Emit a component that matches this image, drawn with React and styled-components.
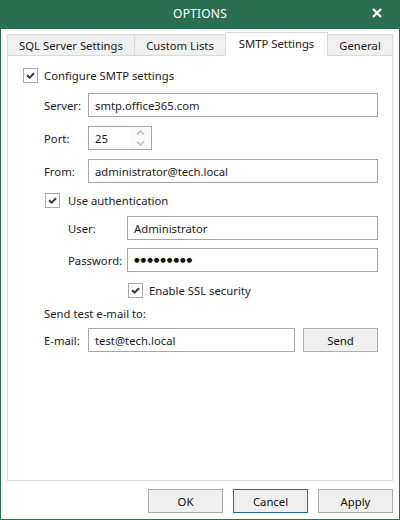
import React from "react";
import styled, { createGlobalStyle } from "styled-components";

const GREEN = "#2b6e51";
const FONT = `"Noto Sans", "Liberation Sans", sans-serif`;

const GlobalStyle = createGlobalStyle`
  html, body {
    margin: 0;
    padding: 0;
    background: #fff;
  }
  body {
    font-family: ${FONT};
    font-size: 11.3px;
    color: #1b1b1b;
  }
  * {
    box-sizing: border-box;
  }
`;

function Check() {
	return (
		<svg width="9" height="7" viewBox="0 0 9 7">
			<path d="M1 3.2 L3.6 5.6 L8 1.2" fill="none" stroke="#3a3a3a" strokeWidth="2" />
		</svg>
	);
}

function CheckItem({ indent, top, gap = 6, children }) {
	return (
		<CheckRow indent={indent} top={top}>
			<CheckBox>
				<Check />
			</CheckBox>
			<CheckText gap={gap}>{children}</CheckText>
		</CheckRow>
	);
}

export default function App() {
	return (
		<>
			<GlobalStyle />
			<Window>
				<TitleBar>
					<span />
					<Title>OPTIONS</Title>
					<Close>
						<svg width="10" height="10" viewBox="0 0 10 10">
							<path d="M1 1 L9 9 M9 1 L1 9" stroke="#fff" strokeWidth="2.2" />
						</svg>
					</Close>
				</TitleBar>

				<Body>
					<TabStrip>
						<Tab width={128} first>
							SQL Server Settings
						</Tab>
						<Tab width={92}>Custom Lists</Tab>
						<Tab width={103} active>
							SMTP Settings
						</Tab>
						<Tab width={66}>General</Tab>
					</TabStrip>

					<Panel>
						<CheckItem indent={0} top={0}>
							Configure SMTP settings
						</CheckItem>

						<FieldRow indent={21} top={10}>
							<Label width={44}>Server:</Label>
							<Field>smtp.office365.com</Field>
						</FieldRow>
						<FieldRow indent={21} top={9}>
							<Label width={44}>Port:</Label>
							<Field width={64}>
								<FieldText>25</FieldText>
								<Spinner>
									<svg width="9" height="5" viewBox="0 0 9 5">
										<path d="M1 4.5 L4.5 1 L8 4.5" fill="none" stroke="#b5b5b5" strokeWidth="1.3" />
									</svg>
									<svg width="9" height="5" viewBox="0 0 9 5">
										<path d="M1 0.5 L4.5 4 L8 0.5" fill="none" stroke="#b5b5b5" strokeWidth="1.3" />
									</svg>
								</Spinner>
							</Field>
						</FieldRow>
						<FieldRow indent={21} top={9}>
							<Label width={44}>From:</Label>
							<Field>administrator@tech.local</Field>
						</FieldRow>

						<CheckItem indent={22} top={10} gap={8}>
							Use authentication
						</CheckItem>
						<FieldRow indent={45} top={8}>
							<Label width={59}>User:</Label>
							<Field>Administrator</Field>
						</FieldRow>
						<FieldRow indent={45} top={8}>
							<Label width={59}>Password:</Label>
							<Field>
								<Dots>●●●●●●●●●</Dots>
							</Field>
						</FieldRow>
						<CheckItem indent={105} top={11}>
							Enable SSL security
						</CheckItem>

						<TextRow indent={21} top={8}>
							Send test e-mail to:
						</TextRow>
						<FieldRow indent={21} top={7}>
							<Label width={44}>E-mail:</Label>
							<Field width={207}>test@tech.local</Field>
							<Button gap={8}>Send</Button>
						</FieldRow>
					</Panel>

					<Footer>
						<Button>OK</Button>
						<Button primary>Cancel</Button>
						<Button>Apply</Button>
					</Footer>
				</Body>
			</Window>
		</>
	);
}

const Window = styled.div`
	width: 400px;
	height: 520px;
	display: flex;
	flex-direction: column;
	border: 1px solid ${GREEN};
	border-top: none;
	background: #fff;
`;

const TitleBar = styled.div`
	height: 29px;
	flex: none;
	display: grid;
	grid-template-columns: 1fr auto 1fr;
	align-items: center;
	background: ${GREEN};
	color: #fff;
	margin: 0 -1px;
	padding: 0 1px;
`;

const Title = styled.div`
	font-size: 12px;
	letter-spacing: 0.2px;
	line-height: 1;
	padding-bottom: 1px;
`;

const Close = styled.div`
	justify-self: end;
	margin-right: 17px;
	display: flex;
	margin-top: -3px;
`;

const Body = styled.div`
	flex: 1;
	display: flex;
	flex-direction: column;
	padding: 3px 6px 0;
`;

const TabStrip = styled.div`
	height: 23px;
	flex: none;
	display: flex;
	align-items: flex-end;
`;

const Tab = styled.div`
	width: ${(p) => p.width}px;
	height: ${(p) => (p.active ? 24 : 21)}px;
	margin-bottom: ${(p) => (p.active ? -1 : 0)}px;
	margin-left: ${(p) => (p.first ? 0 : -1)}px;
	position: relative;
	z-index: ${(p) => (p.active ? 1 : 0)};
	display: flex;
	align-items: center;
	justify-content: center;
	padding-bottom: ${(p) => (p.active ? 2 : 0)}px;
	border: 1px solid #d9d9d9;
	border-bottom: none;
	background: ${(p) => (p.active ? "#fff" : "#f0f0f0")};
	white-space: nowrap;
`;

const Panel = styled.div`
	flex: 1;
	display: flex;
	flex-direction: column;
	padding: 12px 14px 0 15px;
	border: 1px solid #d9d9d9;
	background: #fff;
`;

const CheckRow = styled.div`
	height: 15px;
	display: flex;
	align-items: center;
	margin-top: ${(p) => p.top}px;
	padding-left: ${(p) => p.indent}px;
`;

const CheckBox = styled.div`
	width: 15px;
	height: 15px;
	flex: none;
	display: flex;
	align-items: center;
	justify-content: center;
	border: 1px solid #ababab;
	background: #fff;
`;

const CheckText = styled.span`
	margin-left: ${(p) => p.gap}px;
	white-space: nowrap;
`;

const TextRow = styled.div`
	height: 15px;
	display: flex;
	align-items: center;
	margin-top: ${(p) => p.top}px;
	padding-left: ${(p) => p.indent}px;
`;

const FieldRow = styled.div`
	height: 24px;
	display: flex;
	align-items: center;
	margin-top: ${(p) => p.top}px;
	padding-left: ${(p) => p.indent}px;
`;

const Label = styled.span`
	width: ${(p) => p.width}px;
	flex: none;
	white-space: nowrap;
`;

const Field = styled.div`
	${(p) => (p.width ? `width: ${p.width}px; flex: none;` : "flex: 1;")}
	height: 24px;
	display: flex;
	align-items: center;
	padding-left: 6px;
	border: 1px solid #a6a6a6;
	background: #fff;
	white-space: nowrap;
	overflow: hidden;
`;

const FieldText = styled.span`
	flex: 1;
`;

const Spinner = styled.div`
	width: 21px;
	height: 100%;
	display: flex;
	flex-direction: column;
	align-items: center;
	justify-content: center;
	gap: 6px;
	background: #fafafa;
`;

const Dots = styled.span`
	font-family: "DejaVu Sans", sans-serif;
	font-size: 6.5px;
	letter-spacing: 0.9px;
	color: #111;
`;

const Button = styled.div`
	width: 75px;
	height: 24px;
	flex: none;
	display: flex;
	align-items: center;
	justify-content: center;
	margin-left: ${(p) => p.gap ?? 0}px;
	border: 1px solid ${(p) => (p.primary ? "#2a679c" : "#adadad")};
	background: #efefef;
	color: #111;
`;

const Footer = styled.div`
	height: 38px;
	flex: none;
	display: flex;
	justify-content: flex-end;
	gap: 10px;
	padding: 8px 0 6px;
`;
